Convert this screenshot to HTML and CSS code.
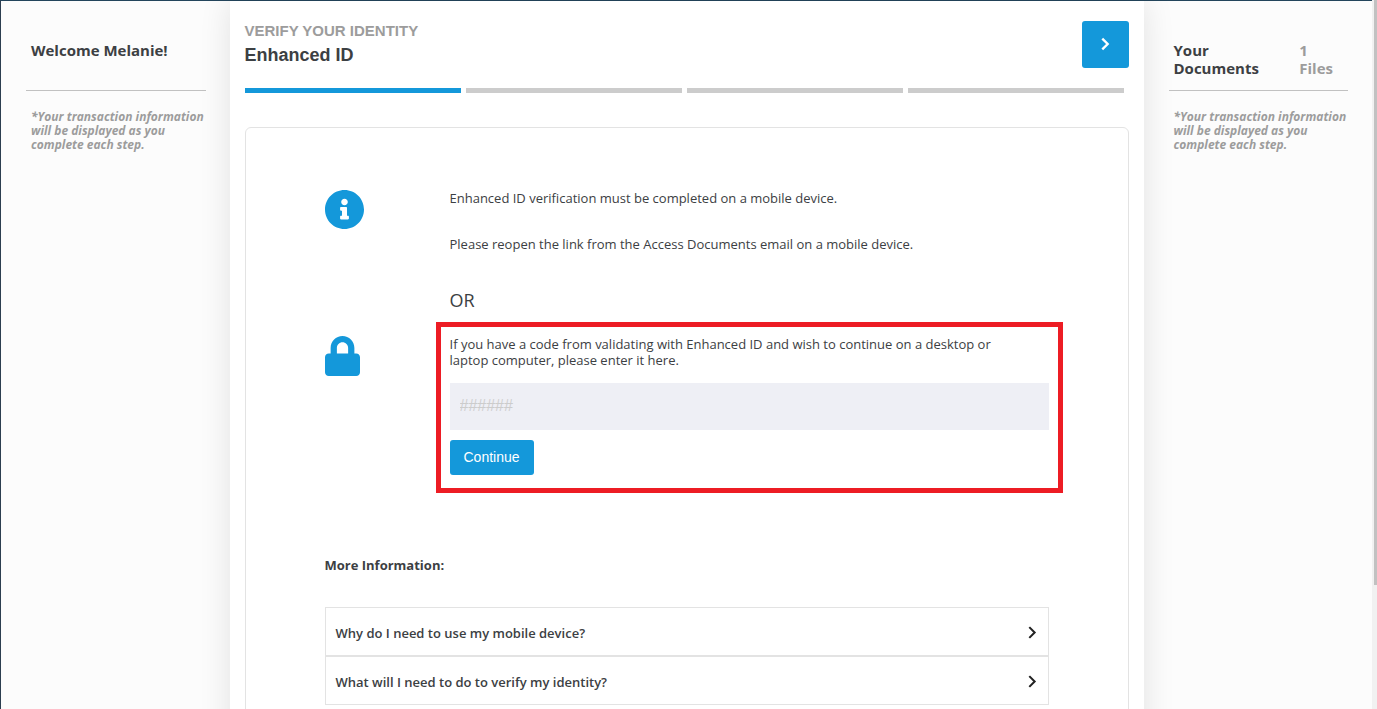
FILE: index.html
```
<!DOCTYPE html>
<html lang="en">
<head>
<meta charset="utf-8">
<title>Verify Your Identity</title>
<link rel="stylesheet" href="styles.css">
</head>
<body>
<div class="shell">
  <div class="page">
    <aside class="side">
      <div class="side-head">
        <h2 class="side-title">Welcome Melanie!</h2>
      </div>
      <p class="side-note">*Your transaction information will be displayed as you complete each step.</p>
    </aside>

    <main class="main">
      <header class="head">
        <div>
          <p class="head-step">VERIFY YOUR IDENTITY</p>
          <h1 class="head-title">Enhanced ID</h1>
        </div>
        <button class="next" type="button" aria-label="Next">
          <svg class="next-icon" viewBox="0 0 10 14" aria-hidden="true"><path d="M2 1.500l5 5-5 5" fill="none" stroke="currentColor" stroke-width="2.200"/></svg>
        </button>
      </header>
      <div class="steps">
        <span class="step step-active"></span>
        <span class="step"></span>
        <span class="step"></span>
        <span class="step"></span>
      </div>

      <section class="card">
        <div class="row">
          <div class="row-icon">
            <svg class="icon-info" viewBox="8 8 496 496" aria-hidden="true"><path fill="currentColor" d="M256 8C119.043 8 8 119.083 8 256c0 136.997 111.043 248 248 248s248-111.003 248-248C504 119.083 392.957 8 256 8zm0 110c23.196 0 42 18.804 42 42s-18.804 42-42 42-42-18.804-42-42 18.804-42 42-42zm56 254c0 6.627-5.373 12-12 12h-88c-6.627 0-12-5.373-12-12v-24c0-6.627 5.373-12 12-12h12v-64h-12c-6.627 0-12-5.373-12-12v-24c0-6.627 5.373-12 12-12h64c6.627 0 12 5.373 12 12v100h12c6.627 0 12 5.373 12 12v24z"/></svg>
          </div>
          <div class="row-body">
            <p class="text">Enhanced ID verification must be completed on a mobile device.</p>
            <p class="text">Please reopen the link from the Access Documents email on a mobile device.</p>
            <p class="or">OR</p>
          </div>
        </div>
        <div class="row">
          <div class="row-icon">
            <svg class="icon-lock" viewBox="0 0 448 512" aria-hidden="true"><path fill="currentColor" d="M400 224h-24v-72C376 68.200 307.800 0 224 0S72 68.200 72 152v72H48c-26.500 0-48 21.500-48 48v192c0 26.500 21.500 48 48 48h352c26.500 0 48-21.500 48-48V272c0-26.500-21.500-48-48-48zm-104 0H152v-72c0-39.700 32.300-72 72-72s72 32.300 72 72v72z"/></svg>
          </div>
          <form class="code-form">
            <label class="code-label" for="code">If you have a code from validating with Enhanced ID and wish to continue on a desktop or laptop computer, please enter it here.</label>
            <input class="code-input" id="code" type="text" placeholder="######">
            <button class="continue" type="button">Continue</button>
          </form>
        </div>

        <h3 class="more">More Information:</h3>
        <div class="faq">
          <button class="faq-item" type="button">
            <span>Why do I need to use my mobile device?</span>
            <svg class="faq-icon" viewBox="0 0 10 14" aria-hidden="true"><path d="M2 2l5 5-5 5" fill="none" stroke="currentColor" stroke-width="1.900"/></svg>
          </button>
          <button class="faq-item" type="button">
            <span>What will I need to do to verify my identity?</span>
            <svg class="faq-icon" viewBox="0 0 10 14" aria-hidden="true"><path d="M2 2l5 5-5 5" fill="none" stroke="currentColor" stroke-width="1.900"/></svg>
          </button>
        </div>
      </section>
    </main>

    <aside class="side">
      <div class="side-head">
        <h2 class="side-title">Your<br>Documents</h2>
        <p class="side-title side-count">1<br>Files</p>
      </div>
      <p class="side-note">*Your transaction information will be displayed as you complete each step.</p>
    </aside>
  </div>
  <div class="scroll"><div class="scroll-thumb"></div></div>
</div>
</body>
</html>
```

FILE: styles.css
```
* {
  box-sizing: border-box;
}

body,
h1,
h2,
h3,
p {
  margin: 0;
}

body {
  background: #fcfcfc;
  color: #3c4043;
  font-family: "Open Sans", "Noto Sans", sans-serif;
  font-size: 13px;
  line-height: 16px;
}

button,
input {
  font: inherit;
}

.shell {
  display: flex;
  height: 100vh;
  overflow: hidden;
}

.page {
  flex: 1;
  display: grid;
  grid-template-columns: 1fr 4fr 1fr;
  border-top: 1px solid #23455c;
  border-left: 1px solid #2c3e50;
}

/* Side panels */
.side {
  padding: 40px 24px 0 25px;
}

.side-head {
  display: flex;
  justify-content: space-between;
  min-height: 50px;
  padding: 0 15px 0 5px;
  border-bottom: 1px solid #c1c1c1;
}

.side-title {
  font-size: 15px;
  font-weight: 700;
  line-height: 18px;
}

.side-count {
  color: #9c9c9c;
}

.side-note {
  padding: 19px 0 0 5px;
  color: #9c9c9c;
  font-size: 12px;
  font-style: italic;
  font-weight: 700;
  line-height: 14px;
}

/* Main column */
.main {
  padding: 20px 15px 0;
  background: #fff;
  box-shadow: 0 0 30px rgba(0, 0, 0, 0.11);
}

.head {
  display: flex;
  justify-content: space-between;
  font-family: "Liberation Sans", Arial, sans-serif;
}

.head-step {
  color: #9c9c9c;
  font-size: 15px;
  font-weight: 700;
  line-height: 20px;
}

.head-title {
  font-size: 18px;
  line-height: 28px;
}

.next {
  display: flex;
  align-items: center;
  justify-content: center;
  width: 47px;
  height: 47px;
  padding: 0;
  border: 0;
  border-radius: 3px;
  background: #1498da;
  color: #fff;
}

.next-icon {
  width: 11px;
  height: 15px;
}

.steps {
  display: grid;
  grid-template-columns: repeat(4, 1fr);
  gap: 5px;
  padding: 19px 5px 0 0;
}

.step {
  height: 5px;
  background: #ccc;
}

.step-active {
  background: #1498da;
}

.card {
  margin-top: 34px;
  padding: 62px 79px;
  border: 1px solid #e3e3e3;
  border-radius: 6px;
}

.row {
  display: flex;
  margin-bottom: 26px;
}

.row-icon {
  flex: 0 0 125px;
  color: #1498da;
}

.icon-info {
  display: block;
  width: 39px;
  height: 39px;
}

.icon-lock {
  display: block;
  width: 35px;
  height: 40px;
}

.row-body {
  flex: 1;
  display: flex;
  flex-direction: column;
  gap: 30px;
}

.or {
  padding-top: 8px;
  font-size: 18px;
  line-height: 20px;
}

/* The frame hangs outside the text column */
.code-form {
  flex: 1;
  display: flex;
  flex-direction: column;
  align-items: flex-start;
  margin: -14px;
  padding: 9px 9px 13px;
  border: 5px solid #ed1c24;
}

.code-label {
  padding-right: 30px;
}

.code-input {
  width: 100%;
  height: 47px;
  margin: 15px 0 10px;
  padding: 0 10px 2px;
  border: 0;
  background: #eeeff5;
  font-family: "Liberation Sans", Arial, sans-serif;
  font-size: 16px;
}

.code-input::placeholder {
  color: #ccc;
}

.continue {
  height: 35px;
  padding: 0 14px 2px;
  border: 0;
  border-radius: 3px;
  background: #1498da;
  color: #fff;
  font-family: "Liberation Sans", Arial, sans-serif;
  font-size: 14px;
}

.more {
  margin: 78px 0 34px;
  font-size: 13px;
}

.faq-item {
  display: flex;
  align-items: center;
  justify-content: space-between;
  width: 100%;
  height: 49px;
  padding: 2px 10px 0;
  border: 1px solid #e3e3e3;
  background: #fff;
  color: #3c4043;
  font-weight: 600;
}

.faq-icon {
  width: 11px;
  height: 15px;
  color: #222;
}

/* Scroll track */
.scroll {
  width: 5px;
  padding-left: 2px;
  background: #f1f1f1;
}

.scroll-thumb {
  height: 82.5%;
  background: #c1c1c1;
}
```
